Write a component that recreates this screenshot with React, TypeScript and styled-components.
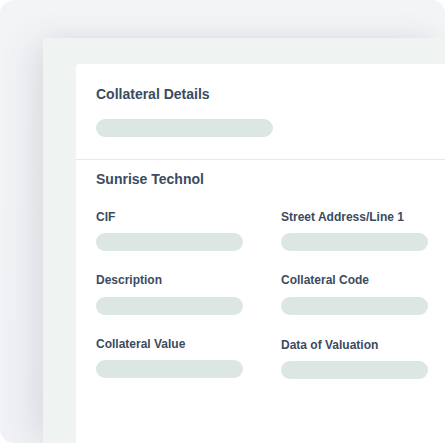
import React from "react";
import styled, { createGlobalStyle } from "styled-components";

const Global = createGlobalStyle`
  html, body { margin: 0; padding: 0; background: #ffffff; }
  body { font-family: "Liberation Sans", Arial, Helvetica, sans-serif; overflow: hidden; }
`;

const Frame = styled.div`
  box-sizing: border-box;
  width: 445px;
  height: 443px;
  border-radius: 14px;
  background: linear-gradient(180deg, #f3f4f6 0%, #f1f2f5 100%);
  padding: 38px 0 0 43px;
  display: flex;
  flex-direction: column;
`;

const Panel = styled.div`
  box-sizing: border-box;
  height: 407px;
  flex: none;
  background: #eff4f2;
  padding: 26px 0 0 33px;
  display: flex;
  flex-direction: column;
  box-shadow: -14px 0 34px -6px rgba(60, 70, 100, 0.14), 0 -6px 18px -8px rgba(60, 70, 100, 0.06);
`;

const Card = styled.div`
  flex: 1;
  background: #ffffff;
  border-top-left-radius: 4px;
  display: flex;
  flex-direction: column;
`;

const Section = styled.div<{ $top: number; $bottom?: number; $divider?: boolean }>`
  padding: ${(p) => p.$top}px 20px ${(p) => p.$bottom ?? 0}px 20px;
  border-bottom: ${(p) => (p.$divider ? "1px solid #e6e9ee" : "none")};
  display: flex;
  flex-direction: column;
`;

const Heading = styled.div`
  font-size: 14px;
  line-height: 16px;
  font-weight: 700;
  color: #3b4b5f;
`;

const Pill = styled.div<{ $width: number }>`
  width: ${(p) => p.$width}px;
  height: 18px;
  border-radius: 9px;
  background: #dce7e3;
`;

const HeadPill = styled(Pill)`
  margin-top: 17px;
`;

const Grid = styled.div`
  margin-top: 23px;
  display: grid;
  grid-template-columns: 147px 147px;
  column-gap: 38px;
  row-gap: 22px;
`;

const Field = styled.div<{ $shift?: number }>`
  display: flex;
  flex-direction: column;
  gap: 9.5px;
  margin-top: ${(p) => p.$shift ?? 0}px;
`;

const Label = styled.div`
  font-size: 12px;
  line-height: 14px;
  font-weight: 700;
  color: #3b4b5f;
  white-space: nowrap;
`;

const fields: { label: string; shift?: number }[] = [
  { label: "CIF" },
  { label: "Street Address/Line 1" },
  { label: "Description" },
  { label: "Collateral Code" },
  { label: "Collateral Value" },
  { label: "Data of Valuation", shift: 1 },
];

export default function App() {
  return (
    <>
      <Global />
      <Frame>
        <Panel>
          <Card>
            <Section $top={22} $bottom={22} $divider>
              <Heading>Collateral Details</Heading>
              <HeadPill $width={177} />
            </Section>
            <Section $top={10.5}>
              <Heading>Sunrise Technol</Heading>
              <Grid>
                {fields.map((f) => (
                  <Field key={f.label} $shift={f.shift}>
                    <Label>{f.label}</Label>
                    <Pill $width={147} />
                  </Field>
                ))}
              </Grid>
            </Section>
          </Card>
        </Panel>
      </Frame>
    </>
  );
}
